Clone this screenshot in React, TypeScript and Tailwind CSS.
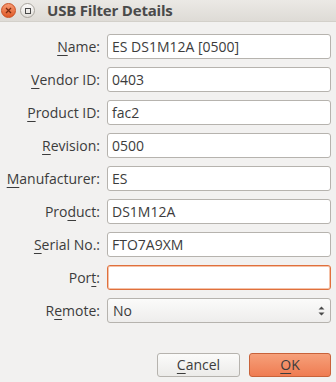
import { ReactNode } from "react";

interface Row { label: ReactNode; value: string; focused?: boolean }

const u = (s: string) => <span className="underline underline-offset-[3px] decoration-1">{s}</span>;

const rows: Row[] = [
    { label: <>{u("N")}ame:</>, value: "ES DS1M12A [0500]" },
    { label: <>{u("V")}endor ID:</>, value: "0403" },
    { label: <>{u("P")}roduct ID:</>, value: "fac2" },
    { label: <>{u("R")}evision:</>, value: "0500" },
    { label: <>{u("M")}anufacturer:</>, value: "ES" },
    { label: <>Pro{u("d")}uct:</>, value: "DS1M12A" },
    { label: <>{u("S")}erial No.:</>, value: "FTO7A9XM" },
    { label: <>Por{u("t")}:</>, value: "", focused: true },
];

export default function App() {
    return (
        <div
            className="w-[336px] h-[382px] flex flex-col bg-[#f2f1f0] text-[#3c3c3c] overflow-hidden"
            style={{ fontFamily: '"Open Sans", "Noto Sans", sans-serif' }}
        >
            {/* Title bar */}
            <div className="h-[22px] shrink-0 flex items-center bg-[linear-gradient(#ebe9e5,#dedbd6)] border-b border-[#d3d0ca]">
                <div className="shrink-0 ml-[1px] w-[15px] h-[15px] rounded-full bg-[linear-gradient(#f79a72,#e05a28)] border border-[#c94f22] flex items-center justify-center">
                    <svg width="7" height="7" viewBox="0 0 7 7">
                        <path d="M1 1L6 6M6 1L1 6" stroke="#7a2a0e" strokeWidth="1.3" />
                    </svg>
                </div>
                <div className="shrink-0 ml-[4px] w-[15px] h-[15px] rounded-full bg-[linear-gradient(#fbfaf9,#e2dfda)] border border-[#a8a49d] flex items-center justify-center">
                    <div className="w-[6px] h-[6px] border border-[#4a4a4a]" />
                </div>
                <span className="shrink-0 ml-[12px] text-[15px] font-bold text-[#4a4a4a] tracking-[-0.2px]">USB Filter Details</span>
            </div>

            {/* Form */}
            <div className="flex flex-col gap-[8px] pt-[12px] pr-[5px]">
                {rows.map((r, i) => (
                    <div key={i} className="flex items-center h-[25px]">
                        <div className="w-[101px] pr-[1px] text-right text-[14px] leading-none">{r.label}</div>
                        <div
                            className={`ml-[6px] flex-1 h-[25px] rounded-[3px] bg-white flex items-center px-[4px] text-[14px] ${
                                r.focused ? "border border-[#e0703c] shadow-[inset_0_0_0_1px_#f5c2a8]" : "border border-[#b6b3ae]"
                            }`}
                        >
                            {r.value}
                        </div>
                    </div>
                ))}
                <div className="flex items-center h-[25px]">
                    <div className="w-[101px] pr-[1px] text-right text-[14px] leading-none">R{u("e")}mote:</div>
                    <div className="ml-[6px] flex-1 h-[25px] rounded-[3px] bg-[linear-gradient(#fbfbfa,#eeedec)] border border-[#b6b3ae] flex items-center justify-between px-[5px] text-[14px]">
                        <span>No</span>
                        <svg width="7" height="12" viewBox="0 0 7 12">
                            <path d="M0.5 4.5L3.5 1.5L6.5 4.5Z M0.5 7.5L3.5 10.5L6.5 7.5Z" fill="#4a4a4a" />
                        </svg>
                    </div>
                </div>
            </div>

            {/* Buttons */}
            <div className="flex justify-end gap-[9px] pr-[5px] mt-[30px]">
                <button className="w-[83px] h-[24px] rounded-[3px] border border-[#b6b3ae] bg-[linear-gradient(#fbfbfa,#ecebe9)] text-[14px] text-[#3c3c3c] leading-none">
                    {u("C")}ancel
                </button>
                <button className="w-[82px] h-[24px] rounded-[3px] border border-[#c8623a] bg-[linear-gradient(#f6a07a,#ef7c52)] text-[14px] text-[#3c3c3c] leading-none">
                    {u("O")}K
                </button>
            </div>
        </div>
    );
}
